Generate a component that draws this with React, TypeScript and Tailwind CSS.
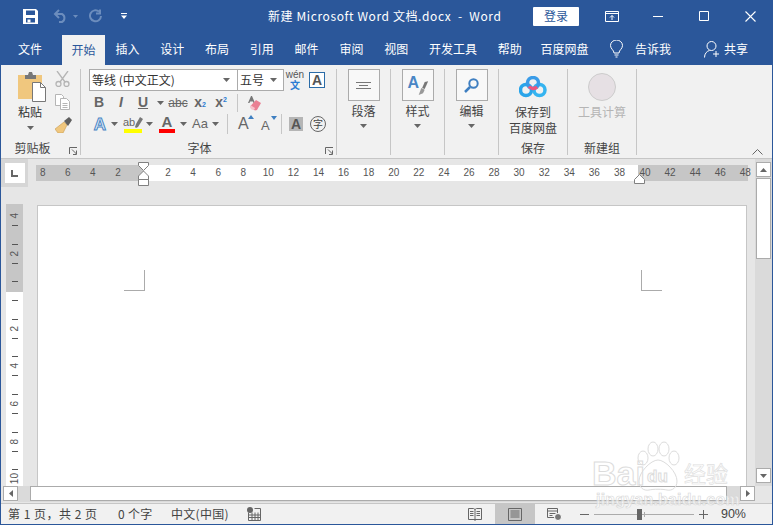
import type { ReactNode } from 'react';

const FONT = 'font-["Noto_Sans_CJK_SC","Noto_Sans",sans-serif]';

const Caret = ({ className = 'fill-[#666]' }: { className?: string }) => (
  <svg width="7" height="4" viewBox="0 0 7 4" className={className}>
    <path d="M0 0h7L3.5 4z" />
  </svg>
);

const CaretCell = ({ className = '' }: { className?: string }) => (
  <div className={`flex w-3 shrink-0 items-center justify-center ${className}`}>
    <Caret />
  </div>
);

function Launcher() {
  return (
    <svg width="9" height="8" viewBox="0 0 9 8" className="absolute bottom-0 right-[2px]" fill="none" stroke="#666">
      <path d="M.5 7V.5H8M3 2.5l4.5 4.5M7.5 3.5v4H4" />
    </svg>
  );
}

function Group(props: { width: string; label: string; labelClass?: string; launcher?: boolean; children: ReactNode }) {
  return (
    <div className={`relative flex h-[86px] shrink-0 flex-col border-r border-[#c6c6c6] ${props.width}`}>
      <div className="min-h-0 flex-1">{props.children}</div>
      <div className={`h-[16px] text-center text-[12px] leading-[18px] text-[#444] ${props.labelClass ?? ''}`}>{props.label}</div>
      {props.launcher && <Launcher />}
    </div>
  );
}

function BoxGroup(props: { label: string; children: ReactNode }) {
  return (
    <Group width="w-[54px]" label="">
      <div className="flex flex-col items-center text-[12px] text-[#444]">
        <div className="flex h-[32px] w-[32px] items-center justify-center border border-[#ababab] bg-[#f8f8f8]">
          {props.children}
        </div>
        <div className="mt-[1px] leading-[17px]">{props.label}</div>
        <Caret className="mt-[5px] fill-[#666]" />
      </div>
    </Group>
  );
}

function TitleBar() {
  return (
    <div className="flex h-[33px] shrink-0 items-center pb-[1px] text-white">
      <svg width="15" height="15" viewBox="0 0 15 15" className="ml-[22px]" fill="#fff">
        <path fillRule="evenodd" d="M0 0h13l2 2v13H0zM3 1.5V6h9V1.5zM3 9v4.5h9V9z" />
        <path d="M4.5 10.5h3v3h-3z" />
      </svg>
      <svg width="15" height="14" viewBox="0 0 15 14" className="ml-[15px]" fill="none" stroke="#6c8dbd" strokeWidth="2">
        <path d="M6 1 2 5l4 4M2 5h7a4.5 4.5 0 0 1 0 8H6" />
      </svg>
      <svg width="5" height="3" viewBox="0 0 5 3" className="ml-[5px]" fill="#6c8dbd">
        <path d="M0 0h5L2.5 3z" />
      </svg>
      <svg width="13" height="14" viewBox="0 0 13 14" className="ml-[11px]" fill="none" stroke="#6c8dbd" strokeWidth="2">
        <path d="M10 2.5a5.5 5.5 0 1 0 2 4.5M11 .5v4H7" />
      </svg>
      <svg width="6" height="6" viewBox="0 0 6 6" className="ml-[19px]" fill="#fff">
        <path d="M0 0h6v1H0zM0 2.5h6L3 6z" />
      </svg>
      <div className="ml-[141px] whitespace-pre text-[12px] leading-none tracking-[0.6px]">新建 Microsoft Word 文档.docx  -  Word</div>
      <div className="ml-auto flex h-[19px] w-[46px] items-center justify-center rounded-[1px] bg-white text-[12px] text-[#2b579a]">登录</div>
      <svg width="14" height="11" viewBox="0 0 14 11" className="ml-[26px]" fill="none" stroke="#fff">
        <path d="M.5 .5h13v10H.5zM.5 2.5h13M7 9V4.500M5 6.500l2-2 2 2" />
      </svg>
      <svg width="10" height="1" viewBox="0 0 10 1" className="ml-[34px]" fill="#fff">
        <path d="M0 0h10v1H0z" />
      </svg>
      <svg width="10" height="10" viewBox="0 0 10 10" className="ml-[36px]" fill="none" stroke="#fff">
        <path d="M.5 .5h9v9h-9z" />
      </svg>
      <svg width="11" height="11" viewBox="0 0 11 11" className="ml-[36px] mr-[16px]" fill="none" stroke="#fff" strokeWidth="1.1">
        <path d="m.5 .5 10 10M10.500 .5l-10 10" />
      </svg>
    </div>
  );
}

const tabs = ['插入', '设计', '布局', '引用', '邮件', '审阅', '视图', '开发工具', '帮助'];

function TabBar() {
  return (
    <div className="flex h-[32px] shrink-0 items-end text-[12px] text-white">
      <div className="ml-[6.5px] flex h-[32px] items-center px-[10.5px]">文件</div>
      <div className="ml-[9.5px] flex h-[30px] items-center bg-[#f1f1f1] px-[9.5px] text-[#2b579a]">开始</div>
      {tabs.map((t) => (
        <div key={t} className="flex h-[32px] items-center px-[10.4px]">
          {t}
        </div>
      ))}
      <div className="ml-[-2px] flex h-[32px] items-center px-[10.4px]">百度网盘</div>
      <div className="ml-auto flex h-[32px] items-center">
        <svg width="13" height="18" viewBox="0 0 13 18" fill="none" stroke="#fff">
          <path d="M4 13c0-3-3.500-4-3.500-7.500a6 5.500 0 0 1 12 0C12.500 9 9 10 9 13zM4.500 15h4M5.500 17h2" />
        </svg>
        <span className="ml-[12px]">告诉我</span>
        <svg width="16" height="17" viewBox="0 0 16 17" className="ml-[33px]" fill="none" stroke="#fff">
          <circle cx="7.500" cy="5" r="4.500" />
          <path d="M.5 16.500c0-4 2.500-6.500 5-7M12 10v6M9 13h6" />
        </svg>
        <span className="ml-[4px] mr-[24px]">共享</span>
      </div>
    </div>
  );
}

function Clipboard() {
  return (
    <Group width="w-[80px]" label="剪贴板" labelClass="pr-[16px]" launcher>
      <div className="flex">
        <div className="ml-[17px] flex w-[24px] flex-col items-center text-[12px] text-[#333]">
          <svg width="28" height="30" viewBox="0 0 28 30" className="ml-[4px] mt-[3px] shrink-0">
            <path d="M0 3h24v24H0z" fill="#f0c77e" />
            <path d="M7 3h3l1-3h3l1 3h3v4H7z" fill="#777" />
            <path d="M14.500 10.500h8l5 5v14h-13z" fill="#fff" stroke="#777" />
            <path d="M22.500 10.500v5h5" fill="none" stroke="#777" />
          </svg>
          <div className="mt-[1px] leading-[17px]">粘贴</div>
          <Caret className="mt-[6px] fill-[#666]" />
        </div>
        <div className="ml-[13px] flex flex-col">
          <svg width="15" height="16" viewBox="0 0 15 16" className="mt-[2px]" fill="none" stroke="#b5b5b5" strokeWidth="1.3">
            <path d="m2 0 8 11M13 0 5 11" />
            <circle cx="3.500" cy="13" r="2.500" />
            <circle cx="11.500" cy="13" r="2.500" />
          </svg>
          <svg width="15" height="16" viewBox="0 0 15 16" className="mt-[7px]" fill="#fff" stroke="#b5b5b5">
            <path d="M.5 .5h6l2 2v9h-8z" />
            <path d="M5.500 4.500h6l3 3v8h-9zM7.500 9.500h5M7.500 11.500h5M7.500 13.500h5" />
          </svg>
          <svg width="17" height="16" viewBox="0 0 17 16" className="mt-[7px]">
            <path d="m9 5 3 3-4 8H3L0 12z" fill="#f0c77e" stroke="#c79a4f" strokeWidth=".6" />
            <path d="m9 4 5-4 3 3-4 6z" fill="#5f5f5f" />
          </svg>
        </div>
      </div>
    </Group>
  );
}

function FontGroup() {
  return (
    <Group width="w-[256px]" label="字体" labelClass="pr-[18px]" launcher>
      <div className="flex flex-col text-[#666]">
        <div className="flex h-[22px] items-center">
          <div className="ml-[8px] flex h-[22px] w-[149px] items-center justify-between border border-[#ababab] bg-white pl-[2px] pr-[7px] text-[12px] text-[#333]">
            等线 (中文正文)
            <Caret />
          </div>
          <div className="ml-[-1px] flex h-[22px] w-[47px] items-center justify-between border border-[#ababab] bg-white pl-[2px] pr-[6px] text-[12px] text-[#333]">
            五号
            <Caret />
          </div>
          <div className="ml-[3px] flex w-[16px] flex-col items-center">
            <span className="font-['Liberation_Sans'] text-[10px] leading-[10px] text-[#555]">wén</span>
            <span className="text-[10px] font-bold leading-[10px] text-[#2b7cd3]">文</span>
          </div>
          <div className="ml-[6px] flex h-[16px] w-[16px] items-center justify-center border border-[#2b6ca8] bg-white font-['Liberation_Sans'] text-[14px] font-bold text-[#555]">
            A
          </div>
        </div>
        <div className="mt-[2px] flex h-[19px] items-center font-['Liberation_Sans'] text-[14px] font-bold">
          <div className="ml-[7px] w-[22px] text-center">B</div>
          <div className="w-[22px] text-center italic">I</div>
          <div className="w-[22px] text-center underline">U</div>
          <CaretCell />
          <div className="w-[24px] text-center text-[12px] font-normal line-through">abc</div>
          <div className="w-[20px] text-center">
            x<span className="text-[7px] text-[#2b7cd3]">2</span>
          </div>
          <div className="w-[22px] text-center">
            x<span className="relative top-[-5px] text-[7px] text-[#2b7cd3]">2</span>
          </div>
          <div className="ml-[5px] h-[18px] w-px bg-[#c6c6c6]" />
          <svg width="15" height="16" viewBox="0 0 15 16" className="ml-[9px]">
            <path d="M1 8 4 1h1l3 7H6.500L6 6.500H3L2.500 8z" fill="#777" />
            <path d="m9 5 5 3-4 7-2 .5-4-2.500L3.500 11z" fill="#ea8093" />
            <path d="M4 10.500 8 13l-1 2-2.500-.5L3 12.500z" fill="#f6c3cc" />
          </svg>
        </div>
        <div className="mt-[2px] flex h-[20px] items-center font-['Liberation_Sans']">
          <div className="ml-[11px] w-[16px] text-center text-[17px] font-bold leading-none text-[#e3eef9] [-webkit-text-stroke:1px_#4a86c5]">A</div>
          <CaretCell />
          <div className="ml-[4px] flex w-[18px] flex-col items-center">
            <div className="flex h-[14px] items-center text-[11px] leading-none">
              ab
              <svg width="8" height="11" viewBox="0 0 8 11" fill="#777">
                <path d="m5 0 3 2-5 8-2 1-1-1 1-3z" />
              </svg>
            </div>
            <div className="h-[4px] w-full bg-[#ffff00]" />
          </div>
          <CaretCell className="ml-[1px]" />
          <div className="ml-[3px] flex w-[18px] flex-col items-center">
            <div className="h-[14px] text-[15px] font-bold leading-[14px]">A</div>
            <div className="h-[4px] w-[16px] bg-[#ff0000]" />
          </div>
          <CaretCell className="ml-[1px]" />
          <div className="ml-[2px] w-[18px] text-center text-[13px]">Aa</div>
          <CaretCell />
          <div className="ml-[6px] h-[20px] w-px bg-[#c6c6c6]" />
          <div className="relative ml-[10px] w-[14px] text-[16px] leading-none">
            A
            <svg width="6" height="4" viewBox="0 0 6 4" className="absolute right-[-2px] top-[-1px]" fill="#3f7fc1">
              <path d="M3 0l3 4H0z" />
            </svg>
          </div>
          <div className="relative ml-[9px] w-[14px] pt-[2px] text-[13px] leading-none">
            A
            <svg width="6" height="4" viewBox="0 0 6 4" className="absolute right-[-2px] top-[-1px]" fill="#3f7fc1">
              <path d="M0 0h6L3 4z" />
            </svg>
          </div>
          <div className="ml-[6px] h-[20px] w-px bg-[#c6c6c6]" />
          <div className="ml-[7px] flex h-[14px] w-[14px] items-center justify-center bg-[#b5b5b5] text-[14px] font-bold text-[#555]">A</div>
          <div className={`ml-[7px] flex h-[16px] w-[16px] items-center justify-center rounded-full border border-[#666] text-[10px] leading-none text-[#444] ${FONT}`}>字</div>
        </div>
      </div>
    </Group>
  );
}

function Ribbon() {
  return (
    <div className="relative flex h-[94px] shrink-0 border-b border-[#c6c6c6] bg-[#f1f1f1] pt-[4px]">
      <Clipboard />
      <FontGroup />
      <BoxGroup label="段落">
        <svg width="15" height="7" viewBox="0 0 15 7" fill="none" stroke="#777">
          <path d="M0 .5h15M3 3.500h9M0 6.500h15" />
        </svg>
      </BoxGroup>
      <BoxGroup label="样式">
        <div className="relative h-[22px] w-[22px]">
          <span className="absolute left-[1px] top-0 font-['Liberation_Sans'] text-[16px] font-bold leading-[18px] text-[#4a86c5]">A</span>
          <svg width="12" height="15" viewBox="0 0 14 17" className="absolute bottom-0 right-0">
            <path d="m9 1 4-1-4 9-3-1z" fill="#777" />
            <path d="m5 8 4 2-2 4-5 2z" fill="#999" />
          </svg>
        </div>
      </BoxGroup>
      <BoxGroup label="编辑">
        <svg width="15" height="15" viewBox="0 0 15 15" fill="none" stroke="#3f7fc1" strokeWidth="2">
          <circle cx="9.500" cy="5.500" r="4.200" />
          <path d="M6 9 1 14" strokeWidth="2.500" />
        </svg>
      </BoxGroup>
      <Group width="w-[69px]" label="保存">
        <div className="flex flex-col items-center text-[12px] leading-[16px] text-[#444]">
          <svg width="28" height="22" viewBox="0 0 28 22" className="mb-[6px] mt-[7px]" fill="none" strokeWidth="3.500">
            <circle cx="7" cy="14" r="5.500" stroke="#2aa5ea" />
            <circle cx="20.500" cy="14" r="5.500" stroke="#35b4f0" />
            <circle cx="14" cy="7" r="5.500" stroke="#3a9ce8" />
            <path d="M10 10.500a5.500 5.500 0 0 0 8 .5" stroke="#f0567d" />
          </svg>
          <div>保存到</div>
          <div>百度网盘</div>
        </div>
      </Group>
      <Group width="w-[69px]" label="新建组">
        <div className="flex flex-col items-center text-[12px] leading-[16px] text-[#b5b5b5]">
          <div className="mb-[3px] mt-[4px] h-[28px] w-[28px] rounded-full border border-[#cccccc] bg-[#e6e0e4]" />
          <div>工具计算</div>
        </div>
      </Group>
      <svg width="11" height="6" viewBox="0 0 11 6" className="absolute bottom-[3px] right-[9px]" fill="none" stroke="#666">
        <path d="m.5 5.500 5-5 5 5" />
      </svg>
    </div>
  );
}

const RulerNum = ({ n }: { n: number }) => <div className="w-[25.09px] shrink-0 text-center">{n}</div>;

function HRuler() {
  return (
    <div className="relative ml-[8px] mt-[6px] flex h-[16px] w-[712px] font-['Liberation_Sans'] text-[10px] leading-[16px] text-[#555]">
      <div className="flex w-[107px] justify-end bg-[#c6c6c6] pr-[12.5px]">
        {[8, 6, 4, 2].map((n) => (
          <RulerNum key={n} n={n} />
        ))}
      </div>
      <div className="flex w-[495px] bg-white pl-[12.5px]">
        {[2, 4, 6, 8, 10, 12, 14, 16, 18, 20, 22, 24, 26, 28, 30, 32, 34, 36, 38].map((n) => (
          <RulerNum key={n} n={n} />
        ))}
      </div>
      <div className="flex w-[110px] bg-[#c6c6c6]">
        <div className="ml-[-5.5px] flex">
          {[40, 42, 44, 46, 48].map((n) => (
            <RulerNum key={n} n={n} />
          ))}
        </div>
      </div>
      <svg width="11" height="28" viewBox="0 0 11 28" className="absolute left-[102px] top-[-3px]" fill="#fff" stroke="#808080">
        <path d="M.5 .5h10v3l-5 5-5-5zM5.500 9l5 5v3.500H.5V14zM.5 17.500h10v6H.5z" />
      </svg>
      <svg width="11" height="10" viewBox="0 0 11 10" className="absolute left-[598px] top-[9px]" fill="#fff" stroke="#808080">
        <path d="M5.500 .5l5 5v4H.5v-4z" />
      </svg>
    </div>
  );
}

const vLabels = ['4', '2', '', '2', '4', '6', '8', '10'];

function VRuler() {
  return (
    <div className="ml-[5px] mt-[-1px] h-[282px] w-[17px] shrink-0 overflow-hidden bg-[linear-gradient(#c6c6c6_88px,#fff_88px)] font-['Liberation_Sans'] text-[10px] text-[#555]">
      <div className="mt-[-7px] flex flex-col">
        {vLabels.map((l, i) => (
          <div key={i} className="relative flex h-[37.6px] shrink-0 flex-col items-center justify-center">
            {i > 0 && <div className="absolute top-[9px] h-px w-[6px] bg-[#555]" />}
            <span className="leading-none [writing-mode:vertical-rl] rotate-180">{l}</span>
            <div className="absolute top-[28px] h-px w-[6px] bg-[#555]" />
          </div>
        ))}
      </div>
    </div>
  );
}

function VScroll() {
  return (
    <div className="flex w-[17px] shrink-0 flex-col items-center bg-[#dadada] pb-[3px] pt-[3px]">
      <div className="flex h-[15px] w-[15px] items-center justify-center border border-[#ababab] bg-white">
        <svg width="7" height="4" viewBox="0 0 7 4" fill="#666">
          <path d="M3.500 0 7 4H0z" />
        </svg>
      </div>
      <div className="mt-[1px] h-[81px] w-[15px] border border-[#ababab] bg-white" />
      <div className="mt-auto flex h-[15px] w-[15px] items-center justify-center border border-[#ababab] bg-white">
        <Caret />
      </div>
    </div>
  );
}

function HScroll() {
  return (
    <div className="flex h-[17px] shrink-0 items-start bg-[#e6e6e6]">
      <div className="ml-[2px] flex h-[15px] w-[15px] items-center justify-center border border-[#ababab] bg-white">
        <svg width="4" height="7" viewBox="0 0 4 7" fill="#666">
          <path d="M4 0v7L0 3.500z" />
        </svg>
      </div>
      <div className="flex h-[16px] w-[722px] bg-[#dadada] pl-[12px]">
        <div className="h-[15px] w-[697px] border border-[#ababab] bg-white" />
      </div>
      <div className="flex h-[15px] w-[15px] items-center justify-center border border-[#ababab] bg-white">
        <svg width="4" height="7" viewBox="0 0 4 7" fill="#666">
          <path d="M0 0v7l4-3.500z" />
        </svg>
      </div>
    </div>
  );
}

function StatusBar() {
  return (
    <div className="flex h-[21px] shrink-0 items-center border-t border-[#c6c6c6] bg-[#f1f1f1] text-[12px] text-[#444]">
      <span className="ml-[7px] w-[110px] whitespace-pre tracking-[0.5px]">第 1 页，共 2 页</span>
      <span className="w-[53px] whitespace-pre tracking-[0.3px]">0 个字</span>
      <span className="w-[76px] tracking-[0.3px]">中文(中国)</span>
      <svg width="14" height="14" viewBox="0 0 14 14" fill="none" stroke="#666">
        <path d="M1.500 5.500v8h12V1.500h-6M1.500 8h12M1.500 10.500h12M5 5.500v8M8 5.500v8M11 5.500v8" />
        <circle cx="3" cy="3" r="3" fill="#666" stroke="none" />
      </svg>
      <svg width="14" height="13" viewBox="0 0 14 13" className="ml-auto" fill="none" stroke="#666">
        <path d="M.5 .5h5L7 1.500 8.500.5h5v11h-13zM7 1.500V13M2 3.500h3.500M2 5.500h3.500M2 7.500h3.500M8.500 3.500H12M8.500 5.500H12M8.500 7.500H12" />
      </svg>
      <div className="ml-[13px] flex h-full w-[40px] items-center justify-center bg-[#c6c6c6]">
        <svg width="14" height="13" viewBox="0 0 14 13" fill="none" stroke="#666">
          <path d="M.5 .5h13v12H.5zM2.500 3h9M2.500 5h9M2.500 7h9M2.500 9h9" />
        </svg>
      </div>
      <svg width="15" height="13" viewBox="0 0 15 13" className="ml-[12px]" fill="none" stroke="#666">
        <path d="M.5 .5h10v9h-10zM.5 3h10M2.500 5.500h6M2.500 7.500h3" />
        <circle cx="11" cy="9" r="3.500" fill="#777" stroke="#fff" />
      </svg>
      <div className="ml-[18px] h-px w-[9px] bg-[#666]" />
      <div className="relative ml-[5px] h-px w-[100px] bg-[#ababab]">
        <div className="absolute left-[43px] top-[-5px] h-[11px] w-[5px] bg-[#666]" />
        <div className="absolute left-[50px] top-[-2px] h-[5px] w-px bg-[#ababab]" />
      </div>
      <svg width="9" height="9" viewBox="0 0 9 9" className="ml-[5px]" stroke="#666">
        <path d="M0 4.500h9M4.500 0v9" />
      </svg>
      <span className="ml-[13px] mr-[26px] font-['Liberation_Sans'] text-[12.500px]">90%</span>
    </div>
  );
}

function Watermark() {
  return (
    <div className="pointer-events-none absolute left-[590px] top-[440px] h-[68px] w-[142px] font-['Liberation_Sans'] font-bold text-white/60">
      <span className="absolute left-[1px] top-[16px] text-[34px] leading-[34px] [-webkit-text-stroke:1px_#dcdcdc]">Bai</span>
      <svg width="54" height="54" viewBox="0 0 54 54" className="absolute left-[40px] top-[1px]" fill="none" stroke="#dcdcdc">
        <ellipse cx="12" cy="17" rx="5" ry="7" />
        <ellipse cx="22" cy="8" rx="5" ry="7" />
        <ellipse cx="33" cy="8" rx="5" ry="7" />
        <ellipse cx="43" cy="17" rx="5" ry="7" />
        <path d="M27 19c7 0 19 12 19 21 0 7-5 10-10 9-4-1-14-1-18 0-5 1-10-2-10-9 0-9 12-21 19-21z" />
      </svg>
      <span className="absolute left-[56px] top-[28px] text-[17px] leading-[17px] [-webkit-text-stroke:1px_#dcdcdc]">du</span>
      <span className={`absolute left-[93px] top-[20px] text-[22px] font-normal leading-[24px] [-webkit-text-stroke:.7px_#e0e0e0] ${FONT}`}>经验</span>
      <span className="absolute left-[5px] top-[52px] whitespace-nowrap text-[16px] leading-[16px] tracking-[0.2px] [-webkit-text-stroke:.6px_#d6d6d6]">jingyan.baidu.com</span>
    </div>
  );
}

export default function App() {
  return (
    <div className={`relative flex h-[525px] w-[773px] flex-col overflow-hidden border-x border-b border-[#2b579a] bg-[#2b579a] ${FONT}`}>
      <TitleBar />
      <TabBar />
      <Ribbon />
      <div className="flex min-h-0 flex-1 bg-[#e6e6e6]">
        <div className="flex min-w-0 flex-1 flex-col">
          <div className="flex h-[46px] shrink-0 items-start">
            <div className="flex h-[28px] w-[27px] shrink-0 items-center justify-center bg-[#d6d6d6]">
              <div className="flex h-[20px] w-[20px] items-center justify-center bg-white">
                <svg width="7" height="7" viewBox="0 0 7 7" fill="#666">
                  <path d="M0 0h2v5h5v2H0z" />
                </svg>
              </div>
            </div>
            <HRuler />
          </div>
          <div className="flex min-h-0 flex-1">
            <VRuler />
            <div className="ml-[14px] flex h-full w-[710px] shrink-0 items-start justify-between border-x border-t border-[#c6c6c6] bg-white pl-[86px] pr-[84px] pt-[64px]">
              <div className="h-[21px] w-[21px] border-b border-r border-[#ababab]" />
              <div className="h-[21px] w-[21px] border-b border-l border-[#ababab]" />
            </div>
          </div>
        </div>
        <VScroll />
      </div>
      <HScroll />
      <StatusBar />
      <Watermark />
    </div>
  );
}
